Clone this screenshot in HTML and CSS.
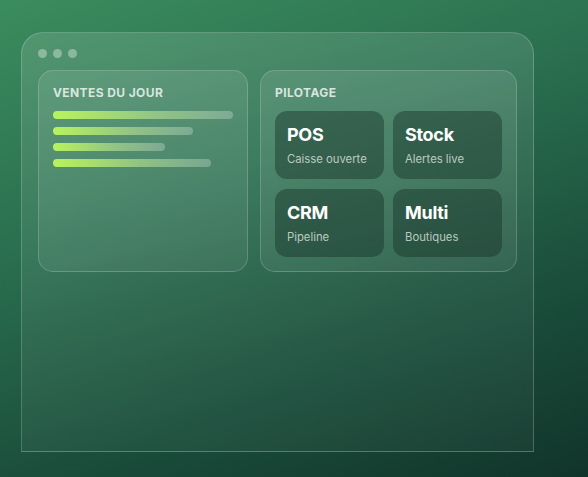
FILE: index.html
```html
<!DOCTYPE html>
<html lang="fr">
<head>
<meta charset="utf-8">
<link rel="stylesheet" href="styles.css">
</head>
<body>
<div class="window">
  <div class="dots"><span class="dot"></span><span class="dot"></span><span class="dot"></span></div>
  <div class="panels">
    <section class="panel">
      <h2 class="label">Ventes du jour</h2>
      <div class="bars">
        <div class="bar" style="width:100%"></div>
        <div class="bar" style="width:78%"></div>
        <div class="bar" style="width:62%"></div>
        <div class="bar" style="width:88%"></div>
      </div>
    </section>
    <section class="panel">
      <h2 class="label">Pilotage</h2>
      <div class="tiles">
        <div class="tile"><div class="tile-title">POS</div><div class="tile-sub">Caisse ouverte</div></div>
        <div class="tile"><div class="tile-title">Stock</div><div class="tile-sub">Alertes live</div></div>
        <div class="tile"><div class="tile-title">CRM</div><div class="tile-sub">Pipeline</div></div>
        <div class="tile"><div class="tile-title">Multi</div><div class="tile-sub">Boutiques</div></div>
      </div>
    </section>
  </div>
</div>
</body>
</html>
```

FILE: styles.css
```css
* { box-sizing: border-box; }
html, body { margin: 0; height: 100%; }
body {
  font-family: "Inter", "DejaVu Sans", sans-serif;
  background: linear-gradient(160deg, #3b8c5e 0%, #2b7150 35%, #1b4f3c 70%, #11342a 100%);
  padding: 32px 54px 0 21px;
  overflow: hidden;
}
.window {
  height: 420px;
  border: 1px solid rgba(255,255,255,0.2);
  border-radius: 22px 22px 0 0;
  background: linear-gradient(170deg, rgba(255,255,255,0.13) 0%, rgba(255,255,255,0.06) 60%, rgba(255,255,255,0.03) 100%);
  padding: 16px;
}
.dots { display: flex; gap: 6px; height: 9px; }
.dot { width: 9px; height: 9px; border-radius: 50%; background: rgba(255,255,255,0.35); }
.panels {
  margin-top: 12px;
  display: grid;
  grid-template-columns: 210fr 257fr;
  gap: 12px;
}
.panel {
  border: 1px solid rgba(255,255,255,0.18);
  border-radius: 15px;
  background: linear-gradient(170deg, rgba(255,255,255,0.1), rgba(255,255,255,0.06));
  padding: 14px;
}
.label {
  margin: 0;
  font-size: 12px;
  line-height: 16px;
  font-weight: 700;
  text-transform: uppercase;
  letter-spacing: 0.4px;
  color: rgba(235,243,238,0.88);
}
.bars { margin-top: 10px; display: flex; flex-direction: column; gap: 8px; }
.bar {
  height: 8px;
  border-radius: 4px;
  background: linear-gradient(90deg, #b8f35c 0%, rgba(200,240,150,0.55) 55%, rgba(255,255,255,0.25) 100%);
}
.tiles {
  margin-top: 10px;
  display: grid;
  grid-template-columns: 1fr 1fr;
  gap: 10px 9px;
}
.tile {
  height: 68px;
  border-radius: 12px;
  background: rgba(20,45,35,0.42);
  padding: 13px 12px 0 12px;
}
.tile-title {
  font-size: 18px;
  line-height: 22px;
  font-weight: 700;
  color: #ffffff;
  letter-spacing: -0.3px;
}
.tile-sub {
  margin-top: 6px;
  font-size: 11.3px;
  line-height: 14px;
  color: rgba(225,235,228,0.78);
}
```
